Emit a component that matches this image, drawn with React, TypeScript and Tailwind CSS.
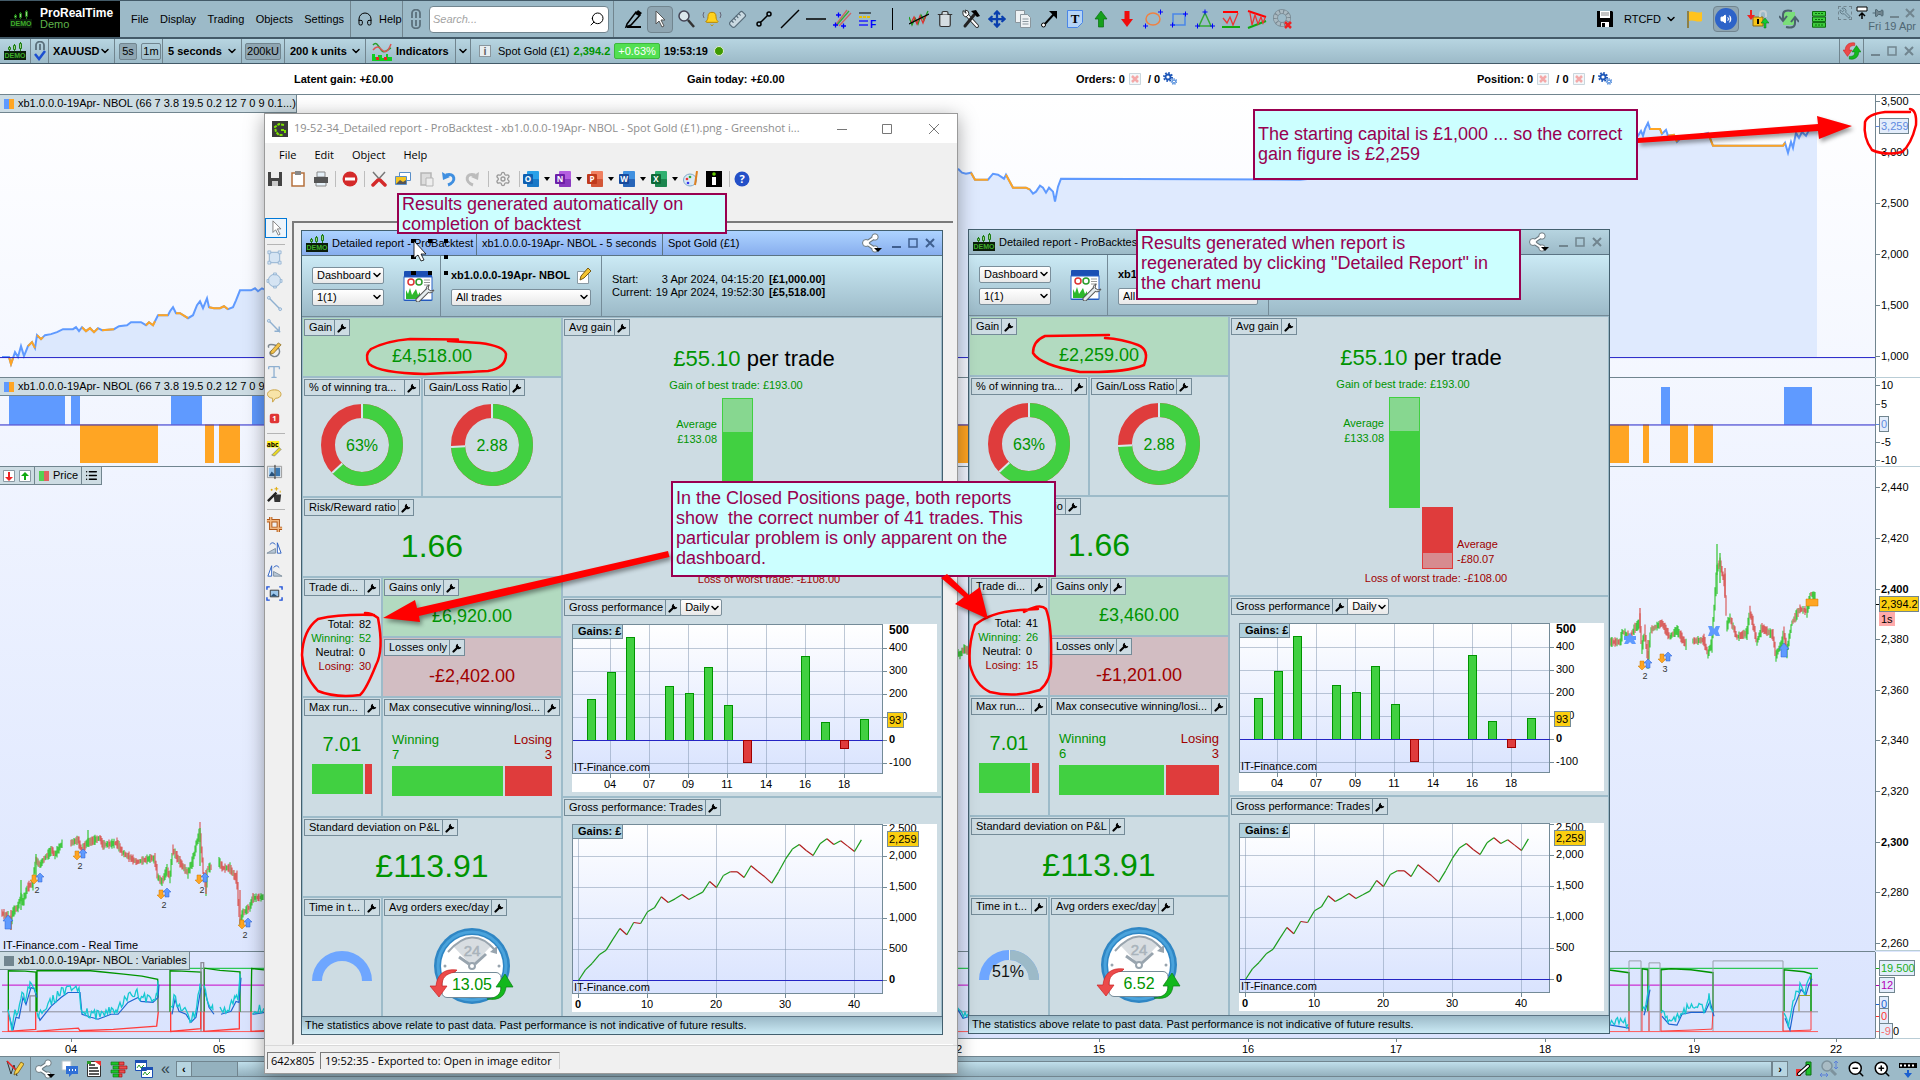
import type { ReactNode } from "react";
import {
    Bell, ChevronDown, Copy, Headphones, Link2, MousePointer2, Move, Pin, Ruler,
    Search, Trash2, Volume2, Wrench, Settings as Cog,
    ZoomIn, ZoomOut, Type, List,
} from "lucide-react";

type Point = [number, number];

const toPath = (pts: Point[]) => pts.map(([x, y]) => `${x},${y}`).join(" ");

const noise = (n: number) => {
    const v = Math.sin(n * 127.1 + 11.7) * 43758.5453;
    return v - Math.floor(v);
};

/* ---------- chart data ---------- */

const equityLeft: Point[] = [
    [2, 358], [9, 358], [11, 365], [15, 353], [18, 358], [21, 347], [24, 357], [28, 347], [32, 343], [35, 349],
    [37, 336], [41, 340], [45, 336], [51, 335], [57, 333], [63, 330], [73, 330], [76, 328], [79, 332], [82, 328],
    [86, 332], [90, 329], [94, 333], [98, 329], [102, 331], [114, 330], [119, 327], [127, 326], [131, 323], [141, 323],
    [146, 326], [149, 323], [153, 326], [158, 316], [168, 316], [170, 312], [173, 308], [176, 314], [180, 314],
    [188, 319], [193, 316], [197, 306], [200, 302], [203, 309], [207, 299], [209, 308], [214, 309], [220, 309],
    [224, 307], [228, 310], [233, 308], [236, 301], [240, 291], [251, 291], [255, 289], [258, 292], [262, 289], [264, 290],
];

const equityRight: Point[] = [
    [958, 169], [962, 173], [966, 174], [971, 173], [975, 180], [988, 180], [993, 174], [998, 175], [1004, 179], [1006, 175],
    [1013, 188], [1026, 188], [1030, 190], [1033, 194], [1036, 192], [1040, 186], [1043, 188], [1046, 193], [1049, 188],
    [1053, 192], [1055, 202], [1058, 187], [1061, 179], [1300, 180], [1420, 168], [1560, 150], [1638, 136], [1641, 131],
    [1643, 136], [1645, 129], [1648, 123], [1650, 129], [1660, 129], [1662, 134], [1666, 130], [1668, 136], [1674, 135],
    [1677, 142], [1682, 137], [1692, 137], [1700, 135], [1708, 133], [1713, 146], [1783, 146], [1785, 143], [1788, 153],
    [1791, 142], [1793, 148], [1796, 133], [1799, 138], [1802, 132], [1806, 136], [1809, 130], [1813, 128], [1817, 128],
];

const orangeRuns: Point[][] = [
    [[9, 358], [11, 365], [13, 359]],
    [[28, 347], [32, 343], [35, 349]],
    [[37, 336], [41, 340], [43, 338]],
    [[82, 328], [86, 332], [90, 329], [94, 333], [98, 329]],
    [[102, 331], [114, 330]],
    [[146, 326], [149, 323], [153, 326], [155, 322]],
    [[158, 316], [168, 316]],
    [[176, 314], [180, 314], [188, 319]],
    [[209, 308], [214, 309], [220, 309], [224, 307], [228, 310]],
    [[971, 173], [975, 180], [988, 180]],
    [[1006, 175], [1013, 188], [1026, 188], [1030, 190]],
    [[1650, 129], [1660, 129], [1662, 134]],
    [[1668, 136], [1674, 135], [1677, 142]],
    [[1708, 133], [1713, 146], [1783, 146], [1785, 143]],
];

const priceRuns: Point[][] = [
    [[2, 913], [8, 917], [11, 923], [13, 912], [18, 907], [21, 897], [23, 902], [28, 887], [33, 883], [36, 860], [40, 865], [45, 858], [52, 850], [55, 855], [63, 842]],
    [[71, 843], [78, 840], [82, 850], [87, 843], [100, 838], [103, 845], [117, 843], [123, 853], [137, 862], [152, 858], [155, 860], [158, 877], [162, 882], [167, 870], [170, 877], [173, 850], [182, 865], [188, 873], [193, 860], [197, 842], [200, 832], [204, 877], [206, 888], [208, 868], [212, 867]],
    [[219, 862], [223, 868], [230, 868], [237, 880], [240, 922], [243, 913], [250, 907], [253, 898], [264, 897]],
    [[957, 652], [960, 655], [964, 649], [969, 651]],
    [[1610, 642], [1620, 642], [1623, 632], [1630, 637], [1635, 628], [1640, 623], [1642, 647], [1645, 633], [1648, 660], [1651, 630], [1662, 623], [1670, 637], [1677, 630], [1687, 646]],
    [[1693, 641], [1704, 640], [1708, 654], [1712, 642], [1717, 570], [1720, 562], [1725, 585], [1727, 626], [1730, 618], [1737, 637], [1747, 633], [1750, 612], [1753, 623], [1757, 642], [1762, 628], [1773, 635], [1776, 656], [1782, 642], [1784, 633], [1787, 651], [1792, 623], [1800, 609], [1807, 611], [1811, 594], [1816, 597]],
];

const variableRuns: Point[][] = [
    [[8, 1011], [12, 1026], [15, 1013], [18, 1014], [22, 993], [25, 1000], [30, 983], [33, 984], [36, 993]],
    [[37, 1011], [39, 1016], [50, 1002], [60, 993], [67, 988], [79, 988], [81, 1010], [90, 1013], [97, 1015], [110, 1010], [117, 1010], [127, 998], [137, 993], [140, 997], [152, 998], [157, 993], [158, 980]],
    [[171, 1010], [174, 995], [178, 1007], [185, 1010], [190, 1018], [195, 1013], [200, 983]],
    [[204, 987], [208, 1003], [213, 1010]],
    [[220, 1010], [230, 1007], [235, 997], [238, 998], [240, 973]],
    [[252, 1010], [264, 1008]],
    [[955, 1002], [962, 1014], [969, 1012]],
    [[1604, 1020], [1628, 1024]],
    [[1643, 1011], [1646, 1000], [1649, 985]],
    [[1661, 1012], [1668, 1020], [1676, 1021], [1681, 1010], [1690, 1008], [1704, 1008], [1709, 997], [1713, 1012]],
    [[1784, 1014], [1789, 1026], [1793, 1003], [1800, 985], [1805, 990], [1808, 980], [1811, 974]],
];

function candles(runs: Point[][]) {
    let up = "";
    let down = "";
    runs.forEach((run) => {
        for (let i = 0; i < run.length - 1; i++) {
            const [x0, y0] = run[i];
            const [x1, y1] = run[i + 1];
            const slope = (y1 - y0) / (x1 - x0);
            for (let x = x0; x < x1; x++) {
                const y = y0 + slope * (x - x0);
                const size = 3 + noise(x) * 7 + Math.min(Math.abs(slope), 14);
                const bar = `M${x} ${(y - size / 2).toFixed(1)}v${size.toFixed(1)}`;
                if (noise(x * 3 + 1) + slope * 0.15 < 0.5) up += bar;
                else down += bar;
            }
        }
    });
    return { up, down };
}

function wiggle(run: Point[], swing: number): Point[] {
    const out: Point[] = [];
    for (let i = 0; i < run.length - 1; i++) {
        const [x0, y0] = run[i];
        const [x1, y1] = run[i + 1];
        for (let x = x0; x < x1; x += 1.5) {
            out.push([x, y0 + ((y1 - y0) * (x - x0)) / (x1 - x0) + (noise(x * 2) - 0.5) * swing]);
        }
    }
    out.push(run[run.length - 1]);
    return out;
}

const price = candles(priceRuns);

const trades = [
    0, 171, 279, 414, 489, 667, 839, 737, 935, 919, 1108, 1172, 1350, 1258, 1317, 1387, 1307, 1366, 1425, 1597, 1500,
    1694, 1753, 1753, 1661, 1850, 1758, 1672, 1570, 1753, 1957, 2119, 2194, 2097, 2016, 2204, 2285, 2194, 2253, 2167,
    2081, 2269,
];

const gainBars = [
    [15, 75], [35, 48], [54, 13], [93, 62], [113, 69], [132, 43], [152, 81], [229, 32], [249, 98], [288, 95],
];

/* ---------- small pieces ---------- */

function DemoLogo() {
    return <svg viewBox="0 0 22 18" className="w-[22px] h-[18px] shrink-0">
        <path d="M5.500 4v5M10.500 2v7M16.500 0v9" stroke="#1d7d13" />
        <path d="M4.500 5.500h2v2h-2zM9.500 3.500h2v4h-2zM15.500 1.500h2v5h-2z" fill="#9ccf86" stroke="#1d7d13" />
        <rect y="9" width="22" height="9" fill="#0b1c0b" />
        <text x="11" y="16" fontSize="7" fontWeight="bold" textAnchor="middle" fill="#3fae2a">DEMO</text>
    </svg>;
}

function WrenchGlyph() {
    return <svg viewBox="0 0 10 10" className="size-[10px]">
        <path d="M1.500 8.500L6 4" stroke="#000" strokeWidth="2.200" strokeLinecap="round" />
        <path d="M6 .8A2.800 2.800 0 1 0 9.300 4L7.400 4.300 5.900 2.800z" fill="#000" />
    </svg>;
}

function ShareGlyph() {
    return <svg viewBox="0 0 22 20" className="w-[22px] h-5 shrink-0">
        <path d="M5 10l9-6M5 10l9 6" stroke="#6b7a82" strokeWidth="4" />
        <circle cx="5" cy="10" r="3.500" fill="#fff" stroke="#6b7a82" />
        <circle cx="14" cy="4" r="3.200" fill="#fff" stroke="#6b7a82" />
        <circle cx="14" cy="16" r="3.200" fill="#fff" stroke="#6b7a82" />
        <path d="M5 10l9-6M5 10l9 6" stroke="#fff" strokeWidth="2" />
        <path d="M13 15h8l-4 4z" />
    </svg>;
}

function Chevron() {
    return <ChevronDown className="size-3 shrink-0" strokeWidth={3} />;
}

function Select({ label, value, className = "" }: { label: string; value: string; className?: string }) {
    return <span className={`grid items-center h-[17px] border border-[#7b8f9b] rounded-[2px] bg-linear-to-b from-white to-[#e9e9e9] ${className}`}>
        <select aria-label={label} className="col-start-1 row-start-1 appearance-none bg-transparent w-full pl-1 text-[11px] leading-[15px]">
            <option>{value}</option>
        </select>
        <span className="col-start-1 row-start-1 justify-self-end pointer-events-none"><Chevron /></span>
    </span>;
}

function WindowButtons({ color }: { color: string }) {
    return <svg viewBox="0 0 44 12" className="w-[44px] h-3 shrink-0" fill="none" stroke={color} strokeWidth="2">
        <path d="M1 10h9M35 2l8 8M43 2l-8 8" />
        <path d="M18 2h8v8h-8z" strokeWidth="1.500" />
    </svg>;
}

function Callout({ className, children }: { className: string; children: ReactNode }) {
    return <p className={`absolute flex border-2 border-[#990050] bg-[#ccffff] text-[#990050] text-[18px] leading-5 pl-[3px] whitespace-pre ${className}`}>
        {children}
    </p>;
}

function SwapArrows({ className = "" }: { className?: string }) {
    return <svg viewBox="0 0 20 20" className={className}>
        <path d="M13 1C6 0 2.500 4 2.500 9H0l5 7 5-7H7C7 5 9 4 13 4z" fill="#ec4a4a" stroke="#c22" strokeWidth=".6" />
        <path d="M7 19c7 1 10.500-3 10.500-8H20l-5-7-5 7h3c0 4-2 5-6 5z" fill="#13b81c" stroke="#0a7d12" strokeWidth=".6" />
    </svg>;
}

/* ---------- report ---------- */

type ReportData = {
    active: boolean;
    capital: string;
    gain: string;
    gains: string;
    losses: string;
    counts: [string, string, string, string];
    winning: number;
    inMarket?: string;
    orders: string;
};

function Cell({ title, wide, tone = "bg-[#cddce3]", className = "", extra, children }: {
    title: string; wide?: boolean; tone?: string; className?: string; extra?: ReactNode; children?: ReactNode;
}) {
    return <section className={`flex flex-col ${tone} ${className}`}>
        <div className="flex mt-px mx-px">
            <h3 className={`flex justify-between h-[17px] border border-[#748b98] text-[11px] leading-[15px] whitespace-nowrap ${wide ? "flex-1" : ""}`}>
                <span className="pl-1 pr-0.5">{title}</span>
                <button aria-label={`${title} settings`} className="w-[15px] border-l border-[#748b98] flex items-center justify-center">
                    <WrenchGlyph />
                </button>
            </h3>
            {extra}
        </div>
        <div className="flex-1 flex flex-col items-center justify-center">{children}</div>
    </section>;
}

function Donut({ share, label }: { share: number; label: string }) {
    const len = 2 * Math.PI * 34;
    const angle = share * 2 * Math.PI;
    const sin = Math.sin(angle);
    const cos = -Math.cos(angle);
    return <svg viewBox="0 0 82 82" className="size-[82px] mb-0.5">
        <circle cx="41" cy="41" r="34" fill="none" stroke="#df3c3c" strokeWidth="14" />
        <circle cx="41" cy="41" r="34" fill="none" stroke="#41d041" strokeWidth="14" strokeDasharray={`${len * share} ${len}`} transform="rotate(-90 41 41)" />
        <path d={`M41 14V0M${41 + sin * 27} ${41 + cos * 27}L${41 + sin * 41} ${41 + cos * 41}`} stroke="#d9e6ec" strokeWidth="2" />
        <text x="41" y="47" fontSize="16" textAnchor="middle" fill="#009400">{label}</text>
    </svg>;
}

function AvgGainChart() {
    return <svg viewBox="0 0 378 260" className="w-[378px] h-[260px]" fontSize="11">
        <text x="191" y="30" fontSize="22" textAnchor="middle"><tspan fill="#009400">£55.10</tspan> per trade</text>
        <text x="173" y="53" textAnchor="middle" fill="#009400">Gain of best trade: £193.00</text>
        <rect x="159.500" y="62.500" width="30" height="110" fill="#87d790" stroke="#41d041" />
        <rect x="159" y="96" width="31" height="77" fill="#41d041" />
        <text x="154" y="92" textAnchor="end" fill="#009400">Average</text>
        <text x="154" y="107" textAnchor="end" fill="#009400">£133.08</text>
        <rect x="192.500" y="172.500" width="30" height="61" fill="#d78b8f" stroke="#df3c3c" />
        <rect x="192" y="172" width="31" height="46" fill="#df3c3c" />
        <text x="227" y="213" fill="#a00000">Average</text>
        <text x="227" y="228" fill="#a00000">-£80.07</text>
        <text x="206" y="247" textAnchor="middle" fill="#a00000">Loss of worst trade: -£108.00</text>
    </svg>;
}

function GainsTag() {
    return <>
        <rect x=".5" y=".5" width="50" height="14" fill="#b0d0dd" stroke="#748b98" />
        <text x="6" y="11" fontWeight="bold">Gains: £</text>
    </>;
}

function DailyChart() {
    return <svg viewBox="0 0 365 168" className="w-[365px] h-[168px] mt-1 ml-1 bg-white" fontSize="11">
        <rect x=".5" y=".5" width="310" height="149" fill="url(#plot)" stroke="#748b98" />
        {[38, 77, 116, 155, 194, 233, 272].map((x, i) => <g key={x}>
            <path d={`M${x}.500 1v148`} stroke="#7f94ad" strokeOpacity=".5" />
            <path d={`M${x}.500 150v4`} stroke="#748b98" />
            <text x={x} y="164" textAnchor="middle">{["04", "07", "09", "11", "14", "16", "18"][i]}</text>
        </g>)}
        {[24, 47, 70, 93, 139].map((y) => <path key={y} d={`M1 ${y}.500h309`} stroke="#7f94ad" strokeOpacity=".5" />)}
        {gainBars.map(([x, top]) => <rect key={x} x={x + 0.5} y={top + 0.5} width="8" height={116 - top} fill="#41d041" stroke="#009400" />)}
        <path d="M1 116.500h314" stroke="#2424c4" />
        <rect x="171.500" y="116.500" width="8" height="22" fill="#df3c3c" stroke="#a00000" />
        <rect x="268.500" y="116.500" width="8" height="8" fill="#df3c3c" stroke="#a00000" />
        {["400", "300", "200", "100", "0", "-100"].map((t, i) => <g key={t}>
            <path d={`M311 ${24 + i * 23}.500h4`} stroke="#748b98" />
            <text x="317" y={27 + i * 23} fontWeight={t === "0" ? "bold" : "normal"}>{t}</text>
        </g>)}
        <text x="317" y="10" fontSize="12" fontWeight="bold">500</text>
        <rect x="315.500" y="88.500" width="16" height="15" fill="#fbce10" stroke="#748b98" />
        <text x="317" y="100">93</text>
        <text x="2" y="147">IT-Finance.com</text>
        <GainsTag />
    </svg>;
}

function TradesChart() {
    const at = (i: number): Point => [6.5 + i * 6.9, 156.5 - trades[i] * 0.062];
    return <svg viewBox="0 0 365 188" className="w-[365px] h-[188px] mt-1 ml-1 bg-white" fontSize="11">
        <rect x=".5" y=".5" width="310" height="169" fill="url(#plot)" stroke="#748b98" />
        {[6, 75, 144, 213, 282].map((x, i) => <g key={x}>
            <path d={`M${x}.500 1v168`} stroke="#7f94ad" strokeOpacity=".5" />
            <path d={`M${x}.500 170v4`} stroke="#748b98" />
            <text x={x} y="184" textAnchor="middle" fontWeight={i === 0 ? "bold" : "normal"}>{i * 10}</text>
        </g>)}
        {[32, 63, 94, 125].map((y) => <path key={y} d={`M1 ${y}.500h309`} stroke="#7f94ad" strokeOpacity=".5" />)}
        <path d="M1 156.500h314" stroke="#2424c4" />
        {trades.slice(1).map((v, i) => {
            const [x1, y1] = at(i);
            const [x2, y2] = at(i + 1);
            return <line key={i} x1={x1} y1={y1} x2={x2} y2={y2} stroke={v > trades[i] ? "#1c9c1c" : "#b01c1c"} strokeWidth="1.200" />;
        })}
        {["2,500", "2,000", "1,500", "1,000", "500", "0"].map((t, i) => <g key={t}>
            <path d={`M311 ${1 + i * 31}.500h4`} stroke="#748b98" />
            <text x="317" y={(i === 0 ? 8 : 4) + i * 31} fontWeight={t === "0" ? "bold" : "normal"}>{t}</text>
        </g>)}
        <rect x="315.500" y="7.500" width="31" height="15" fill="#fbce10" stroke="#748b98" />
        <text x="317" y="19">2,259</text>
        <text x="2" y="167">IT-Finance.com</text>
        <GainsTag />
    </svg>;
}

function OrdersClock({ value }: { value: string }) {
    return <svg viewBox="0 0 86 80" className="w-[86px] h-[80px]">
        <circle cx="43" cy="40" r="38" fill="#2f86c4" />
        <circle cx="43" cy="40" r="34" fill="none" stroke="#4aa3dc" strokeWidth="3" />
        <circle cx="43" cy="40" r="31" fill="#fff" />
        <path d="M43 40L24 20Q43 4 62 20z" fill="#d8dde1" />
        <path d="M19 26Q43-2 66 24" fill="none" stroke="#98a4ae" strokeWidth="2" />
        <path d="M68 20v8l-7-2z" fill="#98a4ae" />
        <text x="43" y="30" fontSize="15" textAnchor="middle" fill="#a9b3bb" stroke="#a9b3bb" strokeWidth=".5">24</text>
        <path d="M30 31l10 7M57 28L46 38" stroke="#98a4ae" strokeWidth="3" />
        <circle cx="43" cy="40" r="3" fill="#fff" stroke="#98a4ae" strokeWidth="2" />
        <circle cx="16" cy="40" r="1.500" fill="#98a4ae" />
        <circle cx="70" cy="40" r="1.500" fill="#98a4ae" />
        <rect x="13" y="46.500" width="59" height="25" rx="5" fill="#fff" stroke="#748b98" />
        <path d="M28 44C14 42 8 50 7 60H1l9 11 8-11h-5c0-8 3-12 13-14z" fill="#ec4a4a" stroke="#c22" strokeWidth=".7" />
        <path d="M58 73c14 2 18-4 19-12h7l-8-13-9 13h5c0 7-4 11-14 12z" fill="#13b81c" stroke="#0a7d12" strokeWidth=".7" />
        <text x="43" y="64" fontSize="16" textAnchor="middle" fill="#009400">{value}</text>
    </svg>;
}

function ReportIcon() {
    return <svg viewBox="0 0 32 32" className="size-8 shrink-0">
        <rect x="1" y="1" width="28" height="30" rx="1" fill="#1b4fb4" />
        <rect x="1" y="7" width="28" height="23" fill="#fff" stroke="#2a62c8" />
        <circle cx="8" cy="12" r="3" fill="none" stroke="#d33" strokeWidth="1.500" />
        <circle cx="16" cy="12" r="3" fill="none" stroke="#2a9c2a" strokeWidth="1.500" />
        <path d="M21 10h6M21 12.500h6M21 15h6" stroke="#999" />
        <path d="M3 29v-9l2 4 2-6 2 7 2-3 2-3 2 6 2-3v7z" fill="#2cb82c" />
        <path d="M15 30l9-9" stroke="#555" strokeWidth="5" strokeLinecap="round" />
        <path d="M26 15a4 4 0 1 0 5 5l-3 1-3-2z" fill="#e6ecef" stroke="#555" />
        <path d="M15 30l9-9" stroke="#e6ecef" strokeWidth="3" strokeLinecap="round" />
    </svg>;
}

function Report({ data }: { data: ReportData }) {
    const [total, winning, neutral, losing] = data.counts;
    return <article className="w-[642px] flex flex-col border border-[#43606f] bg-[#9dbbc9] text-[11px] text-black">
        <header className={`flex items-center h-[25px] border-b border-[#5b7484] bg-linear-to-b ${data.active ? "from-[#add3ff] to-[#88aeee]" : "from-[#b6d4e0] to-[#9cbac8]"}`}>
            <span className="pl-1"><DemoLogo /></span>
            <span className="w-[148px] pl-1 whitespace-nowrap">Detailed report - ProBacktest</span>
            <span className="w-[186px] pl-[5px] border-l border-[#5b7484] leading-6 whitespace-nowrap">xb1.0.0.0-19Apr- NBOL - 5 seconds</span>
            <span className="flex-1 pl-[5px] border-l border-[#5b7484] leading-6">Spot Gold (£1)</span>
            <span className="pr-2"><ShareGlyph /></span>
            <span className="pr-[7px]"><WindowButtons color={data.active ? "#3f5f8f" : "#71858f"} /></span>
        </header>
        <div className="flex h-[61px] border-b border-[#748b98] bg-linear-to-b from-[#cbeaf5] to-[#9cbac8]">
            <div className="w-[139px] flex items-center pl-[10px] gap-[19px] border-r border-[#748b98]">
                <div className="flex flex-col gap-[5px]">
                    <Select label="Page" value="Dashboard" className="w-[72px]" />
                    <Select label="Run" value="1(1)" className="w-[72px]" />
                </div>
                <ReportIcon />
            </div>
            <div className="w-[161px] flex flex-col justify-center gap-1 pl-[10px] border-r border-[#748b98]">
                <div className="flex items-center justify-between pr-2 font-bold whitespace-nowrap">
                    xb1.0.0.0-19Apr- NBOL
                    <svg viewBox="0 0 18 18" className="size-[18px]">
                        <path d="M2.500 4.500h11v12h-11z" fill="#fff" stroke="#8a9aa4" />
                        <path d="M5 13l1-4 7-8 3 3-7 7z" fill="#f4c430" stroke="#7a5a10" />
                    </svg>
                </div>
                <Select label="Trades" value="All trades" className="w-[140px]" />
            </div>
            <div className="grid grid-cols-[42px_115px_auto] content-center pl-[10px] leading-[13px] whitespace-nowrap">
                <span>Start:</span><span className="text-right pr-[5px]">3 Apr 2024, 04:15:20</span><b>[£1,000.00]</b>
                <span>Current:</span><span className="text-right pr-[5px]">19 Apr 2024, 19:52:30</span><b>[{data.capital}]</b>
            </div>
        </div>
        <div className="flex gap-0.5 px-px pt-px">
            <div className="w-[258px] flex flex-col gap-0.5 text-[#009400]">
                <Cell title="Gain" tone="bg-[#b2dac0] [&_h3]:bg-[#cddce3] [&_h3]:text-black" className="h-[58px]">
                    <span className="text-[18px]">{data.gain}</span>
                </Cell>
                <div className="flex gap-0.5 h-[118px] [&_h3]:text-black">
                    <Cell title="% of winning tra..." wide className="w-[118px]"><Donut share={0.63} label="63%" /></Cell>
                    <Cell title="Gain/Loss Ratio" className="flex-1"><Donut share={0.742} label="2.88" /></Cell>
                </div>
                <Cell title="Risk/Reward ratio" tone="bg-[#cddce3] [&_h3]:text-black" className="h-[78px]">
                    <span className="text-[32px]">1.66</span>
                </Cell>
                <div className="flex gap-0.5 h-[118px] [&_h3]:text-black">
                    <Cell title="Trade di..." wide className="w-[78px]">
                        <dl className="grid grid-cols-[51px_auto] gap-x-[5px] w-full pb-0.5 leading-[14px] text-black">
                            <dt className="text-right">Total:</dt><dd>{total}</dd>
                            <dt className="text-right text-[#009400]">Winning:</dt><dd className="text-[#009400]">{winning}</dd>
                            <dt className="text-right">Neutral:</dt><dd>{neutral}</dd>
                            <dt className="text-right text-[#a00000]">Losing:</dt><dd className="text-[#a00000]">{losing}</dd>
                        </dl>
                    </Cell>
                    <div className="flex-1 flex flex-col gap-0.5">
                        <Cell title="Gains only" tone="bg-[#b2dac0] [&_h3]:bg-[#cddce3]" className="flex-1">
                            <span className="text-[18px]">{data.gains}</span>
                        </Cell>
                        <Cell title="Losses only" tone="bg-[#d2bdc2] [&_h3]:bg-[#cddce3]" className="flex-1">
                            <span className="text-[18px] text-[#a00000]">{data.losses}</span>
                        </Cell>
                    </div>
                </div>
                <div className="flex gap-0.5 h-[118px] [&_h3]:text-black">
                    <Cell title="Max run..." wide className="w-[78px]">
                        <span className="text-[20px] leading-6">7.01</span>
                        <div className="flex gap-0.5 w-[60px] h-[30px] mt-2 mb-1.5">
                            <span className="flex-1 bg-[#41d041]" />
                            <span className="w-[7px] bg-[#df3c3c]" />
                        </div>
                    </Cell>
                    <Cell title="Max consecutive winning/losi..." wide className="flex-1">
                        <div className="flex justify-between w-[160px] text-[13px] leading-[15px]">
                            <span>Winning<br />{data.winning}</span>
                            <span className="text-right text-[#a00000]">Losing<br />3</span>
                        </div>
                        <div className="flex gap-0.5 w-[160px] h-[30px] mt-1 mb-1">
                            <span className="bg-[#41d041]" style={{ flexGrow: data.winning }} />
                            <span className="bg-[#df3c3c]" style={{ flexGrow: 3 }} />
                        </div>
                    </Cell>
                </div>
                <Cell title="Standard deviation on P&L" tone="bg-[#cddce3] [&_h3]:text-black" className="h-[78px]">
                    <span className="text-[32px]">£113.91</span>
                </Cell>
                <div className="flex gap-0.5 h-[118px] [&_h3]:text-black">
                    <Cell title="Time in t..." wide className="w-[78px]">
                        <svg viewBox="0 0 60 30" className="w-[60px] h-[30px]">
                            <path d="M5 30a25 25 0 0 1 50 0" fill="none" stroke="#6ea6ff" strokeWidth="10" />
                            {data.inMarket && <>
                                <path d="M31 5a25 25 0 0 1 24 25" fill="none" stroke="#9cbac8" strokeWidth="10" />
                                <path d="M30.500 0v10" stroke="#e4eef2" />
                                <text x="29" y="27" fontSize="16" textAnchor="middle" fill="#111">{data.inMarket}</text>
                            </>}
                        </svg>
                    </Cell>
                    <Cell title="Avg orders exec/day" className="flex-1"><OrdersClock value={data.orders} /></Cell>
                </div>
            </div>
            <div className="flex-1 flex flex-col gap-0.5">
                <Cell title="Avg gain" className="h-[278px]"><AvgGainChart /></Cell>
                <Cell title="Gross performance" className="h-[198px]" extra={<Select label="Period" value="Daily" className="w-[42px] -ml-px" />}>
                    <DailyChart />
                </Cell>
                <Cell title="Gross performance: Trades" className="h-[218px]"><TradesChart /></Cell>
            </div>
        </div>
        <footer className="h-[18px] pl-[3px] leading-[17px] border-t border-[#5b7484] bg-linear-to-b from-[#9cbac8] to-[#cbeaf5]">
            The statistics above relate to past data. Past performance is not indicative of future results.
        </footer>
    </article>;
}

/* ---------- platform bars ---------- */

const drawTools: { name: string; icon: ReactNode }[] = [
    { name: "Draw", icon: <g><path d="M3 15L12 3l4 3-9 10-5 2z" fill="none" stroke="#000" strokeWidth="1.500" /><path d="M11 5l3-4 4 3-3 3zM3 17h14v2H3z" /></g> },
    { name: "Select", icon: <path d="M6 2v13l3-3 3 6 2-1-3-6h4z" fill="#fff" stroke="#555" /> },
    { name: "Magnify", icon: <g fill="none"><circle cx="8" cy="7" r="5" fill="#dbe7ec" stroke="#445" strokeWidth="1.500" /><path d="M12 11l6 7" stroke="#333" strokeWidth="2.500" /></g> },
    { name: "Alert", icon: <g><Bell size={16} x={2} y={2} fill="#ffd21c" stroke="#b88700" strokeWidth={1.5} /><path d="M2 3q-2 3 0 6M18 3q2 3 0 6" fill="none" stroke="#667" /></g> },
    { name: "Measure", icon: <Ruler size={19} x={1} y={1} stroke="#556a78" strokeWidth={1.5} fill="#c9d9e1" className="-scale-x-100 origin-center" /> },
    { name: "Segment", icon: <path d="M6 14L14 6M3 15a2 2 0 1 0 4 0 2 2 0 1 0-4 0M13 5a2 2 0 1 0 4 0 2 2 0 1 0-4 0" fill="none" stroke="#000" strokeWidth="1.500" /> },
    { name: "Line", icon: <path d="M1 19L19 1" stroke="#000" strokeWidth="1.500" /> },
    { name: "Horizontal", icon: <path d="M0 10h20" stroke="#000" strokeWidth="1.500" /> },
    { name: "Channel", icon: <g fill="none" strokeWidth="1.300"><path d="M3 17L15 1M7 17L19 4" stroke="#c66" /><path d="M5 16L17 2" stroke="#3a3" /><path d="M1 16h5M3.500 13.500v5M9 17h5M11.500 14.500v5M4 6h5M6.500 3.500v5" stroke="#00f" /></g> },
    { name: "Fibonacci", icon: <g><path d="M1 4h12" stroke="#000" /><path d="M1 8h12" stroke="#e8c000" strokeWidth="2" strokeDasharray="3 1" /><path d="M1 12h9M1 16h9" stroke="#22f" strokeWidth="1.500" /><text x="12" y="19" fontSize="10" fontWeight="bold" fill="#00f">F</text></g> },
];

const objectTools: { name: string; icon: ReactNode }[] = [
    { name: "Pattern", icon: <g fill="none" strokeWidth="1.300"><path d="M0 8l3 8 3-7 3 6 3-9 3 5 4-9" stroke="#1c9c1c" /><path d="M2 14l3-6 3 7 3-8 3 7 3-8" stroke="#d33" /><path d="M0 15L20 5" stroke="#000" /></g> },
    { name: "Delete", icon: <Trash2 size={18} x={1} y={1} stroke="#333" fill="#d5dde1" strokeWidth={1.6} /> },
    { name: "Tools", icon: <g strokeLinecap="round"><path d="M5 5l11 12" stroke="#333" strokeWidth="4" /><path d="M5 5l11 12" stroke="#fff" strokeWidth="2" /><path d="M2 2q-1 5 3 6l3-3q0-4-4-4l1 3z" fill="#fff" stroke="#333" /><path d="M4 17L13 6" stroke="#222" strokeWidth="3" /><path d="M10 2l5-1 4 6-3 1z" /></g> },
    { name: "Move", icon: <Move size={18} x={1} y={1} stroke="#0a3fae" strokeWidth={3} /> },
    { name: "Copy", icon: <g fill="#eef2f4" stroke="#8a969d"><path d="M2.500 1.500h9v12h-9z" /><path d="M7.500 5.500h7l3 3v10h-10z" /><path d="M9.500 10h6M9.500 12.500h6M9.500 15h6" /></g> },
    { name: "Arrow", icon: <g><path d="M5 16L15 5" stroke="#000" strokeWidth="2" /><path d="M18 2v8l-8-8z" /><circle cx="4.500" cy="16" r="2" fill="#fff" stroke="#000" /></g> },
    { name: "Text", icon: <g><path d="M2.500 1.500h15v12l-5 5h-10z" fill="#b5d4f5" stroke="#4a86e8" /><text x="10" y="14" fontSize="13" fontWeight="bold" textAnchor="middle" fontFamily="Liberation Serif">T</text></g> },
    { name: "Buy arrow", icon: <path d="M10 2l6 8h-3.500v8h-5v-8H4z" fill="#15a01c" stroke="#0a6e10" strokeWidth=".7" /> },
    { name: "Sell arrow", icon: <path d="M10 18l6-8h-3.500V2h-5v8H4z" fill="#f00c0c" /> },
    { name: "Ellipse", icon: <g fill="none"><ellipse cx="10" cy="10" rx="7" ry="6" stroke="#f08040" strokeWidth="1.500" /><path d="M0 17h5M2.500 14.500v5M15 3h5M17.500 .5v5" stroke="#00f" /></g> },
    { name: "Rectangle", icon: <g fill="none"><path d="M4 5h12v11H4z" stroke="#4a86e8" strokeWidth="1.500" /><path d="M1 16h5M3.500 13.500v5M14 5h5M16.500 2.500v5" stroke="#00f" /></g> },
    { name: "Triangle", icon: <g fill="none"><path d="M10 4l6 13H4z" stroke="#3a3" strokeWidth="1.500" /><path d="M0 17h5M2.500 14.500v5M15 17h5M17.500 14.500v5M7.500 3h5M10 .5v5" stroke="#00f" /></g> },
    { name: "Range", icon: <g fill="none"><path d="M2 3h15" stroke="#f00" strokeWidth="2" /><path d="M1 18h18" stroke="#1a1" strokeWidth="2" /><path d="M2 9l4 5 3-6 3 8 5-12" stroke="#e33" strokeWidth="1.300" /></g> },
    { name: "Wedge", icon: <g fill="none"><path d="M1 2l18 6" stroke="#f00" strokeWidth="2" /><path d="M1 19l18-7" stroke="#1a1" strokeWidth="2" /><path d="M3 4l2 12 3-10 3 9 3-7 2 6 2-5" stroke="#e33" strokeWidth="1.300" /></g> },
    { name: "Clear", icon: <g fill="none"><circle cx="9" cy="9" r="6.500" stroke="#76868f" strokeWidth="5" /><circle cx="9" cy="9" r="6.500" stroke="#a9b9c1" strokeWidth="3.500" strokeDasharray="3 1" /><path d="M12 13l6 6M18 13l-6 6" stroke="#e22" strokeWidth="2.500" /></g> },
];

function ToolRow({ tools }: { tools: { name: string; icon: ReactNode }[] }) {
    return <>
        {tools.map((t) => <button key={t.name} aria-label={t.name} className={`w-[26px] h-[27px] shrink-0 flex items-center justify-center ${t.name === "Select" ? "border border-[#71858f] rounded-sm bg-[#8fa6b2]" : ""}`}>
            <svg viewBox="0 0 20 20" className="size-5">{t.icon}</svg>
        </button>)}
    </>;
}

function ChainIcon({ checked }: { checked?: boolean }) {
    return <svg viewBox="0 0 12 20" className="w-3 h-5" fill="none" stroke="#5b707c" strokeWidth="1.800">
        <path d="M2 9V4a3.500 3 0 0 1 8 0v5M6 3v6" />
        {checked ? <path d="M1 13l4 5 6-8" stroke="#1c4fd0" strokeWidth="2.500" /> : <path d="M2 11v5a3.500 3 0 0 0 8 0v-5M6 11v6" />}
    </svg>;
}

function TopBar() {
    return <header className="h-[39px] flex items-center border-t border-b-2 border-[#435a68] bg-[#9cbac8]">
        <div className="w-[120px] h-full shrink-0 flex items-center pl-[10px] gap-2 bg-black text-[11px]">
            <DemoLogo />
            <div className="leading-[11px] text-[#5fb44a]"><b className="text-xs leading-[11px] text-white">ProRealTime</b><br />Demo</div>
        </div>
        <nav className="w-[230px] shrink-0 flex justify-between pl-[11px] pr-[6px]">
            {["File", "Display", "Trading", "Objects", "Settings"].map((m) => <button key={m}>{m}</button>)}
        </nav>
        <button className="w-[53px] h-full shrink-0 flex items-center gap-1.5 pl-1.5 border-x border-[#71858f]">
            <Headphones className="size-4" strokeWidth={1.5} />Help
        </button>
        <span className="w-[26px] shrink-0 flex justify-center"><ChainIcon /></span>
        <label className="w-[180px] h-[27px] shrink-0 flex items-center px-[3px] rounded-sm border border-[#71858f] bg-white">
            <input placeholder="Search..." className="flex-1 min-w-0 italic placeholder:text-[#a3a3a3]" />
            <Search className="size-4 -scale-x-100" strokeWidth={1.5} />
        </label>
        <div className="h-full flex items-center ml-1 pl-[7px] border-l border-[#71858f]">
            <ToolRow tools={drawTools} />
            <span className="w-px h-[22px] ml-[11px] mr-[13px] bg-black" />
            <ToolRow tools={objectTools} />
        </div>
        <div className="ml-auto flex items-center pr-1">
            <svg viewBox="0 0 16 16" className="size-4 mr-[11px]"><path d="M0 0h15l1 1v15H0z" /><path d="M3 0h10v7H3zM4 11h8v5H4z" fill="#fff" /><path d="M4 2h8M4 4h8" stroke="#888" /><path d="M5 12h3v4H5z" /></svg>
            <button className="flex items-center gap-1">RTCFD <Chevron /></button>
            <svg viewBox="0 0 16 18" className="w-4 h-[18px] ml-2.5 mr-[10px]"><path d="M1 1v17" stroke="#8a6d1a" strokeWidth="1.500" /><path d="M2 2c4-2 8 2 13 0v9c-5 2-9-2-13 0z" fill="#ffc31f" /></svg>
            <button aria-label="Sound" className="w-[26px] h-[26px] mr-2 flex items-center justify-center rounded-sm border border-[#71858f] bg-[#8fa6b2]">
                <span className="size-[22px] rounded-full bg-[#2d63c8] flex items-center justify-center text-white"><Volume2 className="size-3" fill="white" /></span>
            </button>
            <svg viewBox="0 0 22 20" className="w-[22px] h-5 mr-[10px]"><path d="M6 8h10v9H6z" fill="#f6c416" stroke="#8a6d1a" /><path d="M10 10h2v5h-2z" /><path d="M13 8V5a3 3 0 0 1 6 0v3" fill="none" stroke="#c6ced2" strokeWidth="2" /><path d="M3 1v5H0l4 5 4-5H5V1z" fill="#e22" /><path d="M17 19v-5h-3l4-5 4 5h-3v5z" fill="#1c3" stroke="#0a6e10" strokeWidth=".5" /></svg>
            <svg viewBox="0 0 20 20" className="size-5 mr-[13px]"><path d="M4 3h12v13H4z" fill="#7ade7a" /><path d="M13 2q-9-2-9 4v5M0 7l4 5 4-5M7 18q9 2 9-4V9M12 13l4-5 4 5" fill="none" stroke="#4c626e" strokeWidth="2" /></svg>
            <svg viewBox="0 0 14 17" className="w-[14px] h-[17px] mr-3"><path d="M.5 .5h13v4.600H.500zM.5 6h13v4.600H.500zM.5 11.600h13v4.600H.500z" fill="#3fcf3f" stroke="#0b6b0b" /><path d="M3 2.500h8M3 8.500h8M3 14h8" stroke="#0b6b0b" strokeDasharray="2 1" /></svg>
            <div className="flex flex-col items-end text-[#4f6773]">
                <div className="flex items-center gap-1">
                    <span className="border border-dashed border-[#71858f]"><Wrench className="size-3 -scale-x-100" strokeWidth={1.5} /></span>
                    <svg viewBox="0 0 12 14" className="w-3 h-[14px]"><path d="M1 1h10v4H1z" fill="#fff" stroke="#000" /><path d="M6 7v6M3 10l3-3 3 3" fill="none" stroke="#000" strokeWidth="1.500" /></svg>
                    <Pin className="size-3 rotate-90" fill="#71858f" />
                    <svg viewBox="0 0 28 12" className="w-7 h-3" stroke="#71858f" strokeWidth="2"><path d="M2 10h9M18 2l8 8M26 2l-8 8" /></svg>
                </div>
                <span className="leading-3">Fri 19 Apr</span>
            </div>
        </div>
    </header>;
}

function InstrumentBar() {
    return <div className="h-[25px] flex items-center border-b border-[#435a68] bg-linear-to-b from-[#b7d5e1] to-[#9cbac8] [&>*]:shrink-0">
        <span className="w-[31px] h-full pl-1 flex items-center border-r border-[#71858f]"><DemoLogo /></span>
        <span className="w-[18px] h-full flex items-center justify-center border-r border-[#71858f]"><ChainIcon checked /></span>
        <button className="w-[66px] h-full flex items-center justify-between pl-1 pr-1 font-bold border-r border-[#71858f]">XAUUSD <Chevron /></button>
        <div className="w-[48px] h-full flex items-center gap-1 pl-1 border-r border-[#71858f]">
            <button className="w-[18px] h-[17px] rounded-xs border border-[#71858f] bg-[#8fa6b2] leading-[15px]">5s</button>
            <button className="w-5 h-[17px] rounded-xs border border-[#71858f] leading-[15px]">1m</button>
        </div>
        <button className="w-[79px] h-full flex items-center justify-between pl-[5px] pr-[3px] font-bold border-r border-[#71858f]">5 seconds <Chevron /></button>
        <div className="w-[43px] h-full flex items-center justify-center border-r border-[#71858f]">
            <button className="w-9 h-[17px] rounded-xs border border-[#71858f] bg-[#8fa6b2] leading-[15px]">200kU</button>
        </div>
        <button className="w-[81px] h-full flex items-center justify-between pl-[5px] pr-[3px] font-bold border-r border-[#71858f]">200 k units <Chevron /></button>
        <button className="w-[90px] h-full flex items-center gap-1 pl-1.5 font-bold border-r border-[#71858f]">
            <svg viewBox="0 0 20 20" className="size-5"><path d="M1 4c4-5 6 3 9 6s6-2 9-3" fill="none" stroke="#2a9c2a" strokeWidth="1.500" /><path d="M1 9c4-5 6-3 9 0s6 2 9-6" fill="none" stroke="#d55" strokeWidth="1.500" /><path d="M0 20v-7h3v3h3v-2h4v3h4v-4h2v3h4v4z" fill="#1c2" /><path d="M4 16h3v3H4zM12 16h3v3h-3z" fill="#e22" /></svg>
            Indicators
        </button>
        <button aria-label="More indicators" className="w-[15px] h-full flex items-center justify-center border-r border-[#71858f]"><Chevron /></button>
        <span className="w-3 h-3 ml-2 mr-[7px] border border-[#8a969d] bg-[#e8eef1] text-[#666] font-bold leading-[10px] text-center">i</span>
        <span>Spot Gold (£1)</span>
        <b className="ml-1 text-[#009400]">2,394.2</b>
        <span className="ml-1 px-[3px] leading-[14px] rounded-xs border border-[#3cb83c] bg-[#52e052] text-white">+0.63%</span>
        <b className="ml-1">19:53:19</b>
        <span className="size-2 ml-[6px] rounded-full border border-[#dfeed0] bg-[#3f9a00] box-content" />
        <span className="h-full ml-auto w-[25px] flex items-center justify-center border-x border-[#71858f]"><SwapArrows className="size-[18px]" /></span>
        <span className="pl-[6px] pr-[6px]"><WindowButtons color="#71858f" /></span>
    </div>;
}

function CancelBox() {
    return <svg viewBox="0 0 12 12" className="inline size-3 mx-1 mb-0.5"><path d="M.5 .5h11v11H.500z" fill="#f3f7f9" stroke="#c9d6dd" /><path d="M3 3l6 6M9 3l-6 6" stroke="#f4a9a9" strokeWidth="2.500" /></svg>;
}

function Gears() {
    return <svg viewBox="0 0 14 13" className="inline w-[14px] h-[13px] mb-0.5" fill="none">
        <circle cx="5" cy="5" r="4" stroke="#1c56b8" strokeWidth="2" strokeDasharray="1.600 1.500" />
        <circle cx="5" cy="5" r="2.500" stroke="#1c56b8" strokeWidth="1.800" />
        <circle cx="11" cy="9.500" r="2.500" stroke="#3c7fd8" strokeWidth="1.500" strokeDasharray="1.200 1" />
        <circle cx="11" cy="9.500" r="1.500" stroke="#3c7fd8" />
    </svg>;
}

function AccountBar() {
    return <div className="h-[31px] grid grid-cols-[294fr_393fr_389fr_401fr_443fr] items-center font-bold border-b border-[#71858f] bg-white whitespace-nowrap">
        <span className="col-start-2">Latent gain: +£0.00</span>
        <span>Gain today: +£0.00</span>
        <span>Orders: 0<CancelBox /> / 0 <Gears /></span>
        <span>Position: 0<CancelBox /> / 0<CancelBox /> / <Gears /></span>
    </div>;
}

/* ---------- charts behind the windows ---------- */

function PanelTag({ children }: { children: ReactNode }) {
    return <div className="absolute top-0 left-0 h-[18px] flex items-center border-r border-b border-[#71858f] bg-[#cddce3] whitespace-nowrap">
        {children}
    </div>;
}

function Swatch({ a, b }: { a: string; b: string }) {
    return <svg viewBox="0 0 10 10" className="size-[10px] ml-1 mr-1"><path d="M0 0h5v10H0z" fill={a} /><path d="M5 0h5v10H5z" fill={b} /></svg>;
}

function Panel({ top, height, className, axis, tag, children }: {
    top: number; height: number; className: string; axis: ReactNode; tag: ReactNode; children: ReactNode;
}) {
    return <div className={`flex ${className}`}>
        <div className="relative flex-1 min-w-0 border-b border-[#71858f]">
            <svg viewBox={`0 ${top} 1875 ${height}`} preserveAspectRatio="none" className="block w-full h-full" fill="none">{children}</svg>
            {tag}
        </div>
        <svg viewBox={`1875 ${top} 45 ${height}`} preserveAspectRatio="xMinYMin" className="w-[45px] h-full shrink-0 bg-white" fontSize="11">
            <path d={`M1875.500 ${top}v${height}`} stroke="#71858f" />
            <path d={`M1875 ${top + height - 0.5}h45`} stroke="#b9cdd6" />
            {axis}
        </svg>
    </div>;
}

function AxisLabels({ items }: { items: [string, number][] }) {
    return <>
        {items.map(([t, y]) => <g key={t + y}>
            <path d={`M1876 ${y}.500h4`} stroke="#71858f" />
            <text x="1881" y={y + 4} fontWeight={t === "2,400" || t === "2,300" ? "bold" : "normal"}>{t}</text>
        </g>)}
    </>;
}

function AxisTag({ y, width, text, color, fill = "#e3edfb" }: { y: number; width: number; text: string; color: string; fill?: string }) {
    return <g>
        <path d={`M1876 ${y}.500h4`} stroke={color} />
        <rect x="1879.500" y={y - 7.5} width={width} height="15" fill={fill} stroke="#71858f" />
        <text x="1881" y={y + 4} fill={color}>{text}</text>
    </g>;
}

function TradeMark({ x, y, count }: { x: number; y: number; count?: string }) {
    return <g transform={`translate(${x} ${y})`}>
        <path d="M-3 8l4-4H-1V-1h-4v5h-2z" fill="#ffa523" stroke="#c97800" strokeWidth=".5" />
        <path d="M3-3l4 4H5v5H1V1h-2z" fill="#5f9aff" stroke="#2a5fd0" strokeWidth=".5" />
        {count && <text x="0" y="17" fontSize="9" textAnchor="middle" fill="#333">{count}</text>}
    </g>;
}

function Charts() {
    return <div className="flex-1 flex flex-col bg-linear-to-b from-white to-[#d9e3fe]">
        <Panel top={95} height={283} className="h-[283px]"
            tag={<PanelTag><Swatch a="#5f9aff" b="#ffa523" /><span>xb1.0.0.0-19Apr- NBOL (66 7 3.8 19.5 0.2 12 7 0 9 0.1...)</span></PanelTag>}
            axis={<>
                <AxisLabels items={[["3,500", 101], ["3,000", 152], ["2,500", 203], ["2,000", 254], ["1,500", 305], ["1,000", 356]]} />
                <AxisTag y={126} width={29} text="3,259" color="#5f8ae0" />
            </>}>
            <polygon points={`2,358 ${toPath(equityLeft)} 264,358`} fill="#dce8fd" />
            <polygon points={`958,358 ${toPath(equityRight)} 1817,358`} fill="#dfeafe" />
            <polyline points={toPath(equityLeft)} stroke="#5f9aff" strokeWidth="2" />
            <polyline points={toPath(equityRight)} stroke="#5f9aff" strokeWidth="2" />
            {orangeRuns.map((run) => <polyline key={run[0][0]} points={toPath(run)} stroke="#ffa523" strokeWidth="2" />)}
            <path d="M0 358.500h1875" stroke="#2222c8" />
        </Panel>
        <Panel top={378} height={89} className="h-[89px]"
            tag={<PanelTag><Swatch a="#5f9aff" b="#ffa523" /><span>xb1.0.0.0-19Apr- NBOL (66 7 3.8 19.5 0.2 12 7 0 9 0.1...)</span></PanelTag>}
            axis={<>
                <AxisLabels items={[["10", 385], ["5", 404], ["-5", 442], ["-10", 460]]} />
                <AxisTag y={424} width={9} text="0" color="#5f8ae0" />
            </>}>
            <path d="M9 387h56v38H9zM71 387h9v38h-9zM171 387h31v38h-31zM252 387h14v38h-14zM1661 387h9v38h-9zM1784 387h28v38h-28z" fill="#5f9aff" />
            <path d="M80 425h78v39H80zM205 425h9v39h-9zM219 425h21v39h-21zM955 425h20v39h-20zM1600 425h29v39h-29zM1643 425h6v39h-6zM1670 425h18v39h-18zM1694 425h19v39h-19z" fill="#ffa523" />
            <path d="M0 425.500h1875" stroke="#2222c8" />
        </Panel>
        <Panel top={467} height={484} className="flex-1 min-h-[484px]"
            tag={<>
                <PanelTag>
                    <svg viewBox="0 0 34 17" className="w-[34px] h-[17px]"><path d="M3.500 3.500h11v11h-11zM19.500 3.500h11v11h-11z" fill="#fff" stroke="#8a9aa4" /><path d="M8 5v5H5l4 4 4-4h-3V5z" fill="#e22" /><path d="M24 13V9h-3l4-4 4 4h-3v4z" fill="#1a1" /></svg>
                    <span className="h-full flex items-center border-x border-[#71858f] pr-[3px]"><Swatch a="#52d052" b="#e06060" />Price</span>
                    <List className="size-[13px] mx-[3px]" strokeWidth={2.5} />
                </PanelTag>
                <span className="absolute -bottom-0.5 left-[3px]">IT-Finance.com - Real Time</span>
            </>}
            axis={<>
                <AxisLabels items={[["2,440", 487], ["2,420", 538], ["2,400", 589], ["2,380", 639], ["2,360", 690], ["2,340", 740], ["2,320", 791], ["2,300", 842], ["2,280", 892], ["2,260", 943]]} />
                <AxisTag y={604} width={39} text="2,394.2" color="#000" fill="#fbce10" />
                <rect x="1879" y="612" width="16" height="14" fill="#ffaaaa" />
                <text x="1881" y="623">1s</text>
            </>}>
            <path d={price.up} stroke="#41c841" strokeWidth="1.200" />
            <path d={price.down} stroke="#d9605f" strokeWidth="1.200" />
            <path d="M21 880v30M36 854v22M88 830v16M200 828v38M1717 544v50M1720 553v30" stroke="#41c841" strokeWidth="1.300" />
            <path d="M206 870v24M240 890v34M11 910v20M1640 608v20M1648 640v28M1725 568v30" stroke="#d9605f" strokeWidth="1.300" />
            <path d="M8 915l5 6h-2v8H5v-8H3zM1784 643l5 6h-2v8h-6v-8h-2z" fill="#5f9aff" stroke="#2a5fd0" strokeWidth=".5" />
            <TradeMark x={37} y={876} count="2" />
            <TradeMark x={80} y={852} count="2" />
            <TradeMark x={164} y={891} count="2" />
            <TradeMark x={202} y={876} count="2" />
            <TradeMark x={245} y={921} count="2" />
            <TradeMark x={1645} y={662} count="2" />
            <TradeMark x={1665} y={655} count="3" />
            <path d="M1624 636h4l2-3 2 3h4v4h-2l2 4h-4l-2-2-2 2h-4l2-4h-2zM1708 626h4l2 3 2-3h4l-2 5 2 5h-4l-2-2-2 2h-4l2-5z" fill="#5f9aff" />
            <path d="M1806 599h12v7h-12z" fill="#ffa523" stroke="#c97800" strokeWidth=".5" />
        </Panel>
        <Panel top={951} height={87} className="h-[87px]"
            tag={<PanelTag><span className="size-[10px] ml-1 mr-1 bg-[#71858f]" /><span className="pr-0.5">xb1.0.0.0-19Apr- NBOL : Variables</span></PanelTag>}
            axis={<>
                <AxisTag y={967} width={35} text="19.500" color="#1cae1c" />
                <AxisTag y={984} width={15} text="12" color="#b400b4" />
                <AxisTag y={1003} width={9} text="0" color="#1e64d2" />
                <AxisTag y={1015} width={9} text="0" color="#f33" />
                <text x="1893" y="1034">0</text>
                <AxisTag y={1030} width={13} text="-9" color="#f76b6b" />
            </>}>
            <path d="M2 984.500h264M955 984.500h20M1600 984.500h218" stroke="#c800c8" />
            <path d="M2 1031.500h264M955 1031.500h20M1600 1031.500h218" stroke="#ff5a5a" />
            <path d="M2 1011.500h264M955 1011.500h20M1600 1011.500h218" stroke="#8c8c96" />
            <path d="M190 967.500h76M955 967.500h20M1600 967.500h218" stroke="#00be28" />
            {/* the left part is plotted on a grid three times finer than the page */}
            <g transform="translate(0 780) scale(.33333)" strokeWidth="4">
                <path d="M25 694V570l50 1 33 3v120M111 694V570h160l30 3 70 7 55 6 47 10 2 98M510 694V570l35 1 58 3v120M613 694V562l47 7 60 4v121M753 694l2-131 37 4" stroke="#009400" />
                <path d="M603 754V545h8v209M90 694v-48h16M475 650v44M718 640v54" stroke="#8c8c96" />
                <path d="M25 694v60l82-6V694M110 754l70-6 55-4 5 8 100-4 130-10 5-44M512 694v60l90-8V694M612 694v60l106-8V694M753 694v60l39-2" stroke="#ff3c3c" />
            </g>
            <path d="M1600 968l29 4v39M1642 1011v-43l6 1v42M1661 1011v-42l10-1 20 1 22 3v39M1784 1011v-42l20 2 7 2v38" stroke="#009400" strokeWidth="1.500" />
            <path d="M1629 1031v-71h12v71M1649 1031v-69h11v69M1713 1031v-71h70v71" stroke="#96a0aa" />
            <path d="M1629 1011v20M1642 1011v20M1649 1011v20M1661 1011v20l30-1 21-1 1-18M1783 1011v20l28-1v-19" stroke="#ff3c3c" />
            <path d="M1799 1011v-16h11" stroke="#a0a01e" />
            {variableRuns.map((run) => <g key={run[0][0]}>
                <polyline points={toPath(run.map(([x, y]): Point => [x + 1, y + 4]))} stroke="#1e64d2" strokeWidth="1.200" />
                <polyline points={toPath(wiggle(run, 10))} stroke="#14c8d2" strokeWidth="1.300" />
            </g>)}
        </Panel>
        <div className="h-[17px] flex bg-white">
            <svg viewBox="0 1038 1920 17" preserveAspectRatio="none" className="w-full h-full" fontSize="11">
                {([["04", 71], ["05", 219], ["12", 956], ["15", 1099], ["16", 1248], ["17", 1396], ["18", 1545], ["19", 1694], ["22", 1836]] as Array<[string, number]>).map(([t, x]) => <g key={t}>
                    <path d={`M${x}.500 1038v3`} stroke="#71858f" />
                    <text x={x} y="1052" textAnchor="middle">{t}</text>
                </g>)}
            </svg>
        </div>
    </div>;
}

function BottomBar() {
    return <footer className="h-[25px] flex items-center border-t border-[#71858f] bg-[#9cbac8] [&>svg]:shrink-0">
        <span className="w-[31px] h-full shrink-0 flex items-center justify-center border-r border-[#71858f]">
            <svg viewBox="0 0 18 18" className="size-[18px]"><path d="M1 1l4 13 3-9 3 11" fill="none" stroke="#333" /><path d="M1 1l10 10" stroke="#e22" strokeWidth="1.500" /><path d="M8 15l1-4 6-9 3 2-6 9z" fill="#f6d04a" stroke="#7a5a10" strokeWidth=".8" /></svg>
        </span>
        <span className="ml-[3px] flex shrink-0"><ShareGlyph /></span>
        <svg viewBox="0 0 18 18" className="size-[18px] ml-[5px]"><path d="M1 1h9v9H1z" fill="#fff" stroke="#b8c4ca" /><path d="M5 6h12v8h-6l-3 3v-3H5z" fill="#2f6fd6" /><path d="M8 10h1M11 10h1M14 10h1" stroke="#fff" strokeWidth="2" /></svg>
        <svg viewBox="0 0 16 18" className="w-4 h-[18px] ml-[7px]"><path d="M1.500 1.500h13v15h-13z" fill="#fff" stroke="#333" /><path d="M3 5h6M3 8h9M3 11h10M3 14h10" stroke="#222" strokeWidth="1.500" /><path d="M8 1h7v5z" fill="#e33" /><path d="M1 1h4v3H1z" fill="#2a9c2a" /></svg>
        <svg viewBox="0 0 18 18" className="size-[18px] ml-[8px]"><path d="M1 2h8v3H1zM3 6h6v3H3zM1 10h8v3H1zM3 14h6v3H3z" fill="#1fc32c" stroke="#0a6e10" strokeWidth=".6" /><path d="M9 2h5v3H9zM9 6h8v3H9zM9 10h6v3H9zM9 14h3v3H9z" fill="#e85050" stroke="#a00000" strokeWidth=".6" /></svg>
        <svg viewBox="0 0 18 18" className="size-[18px] ml-[7px]"><path d="M.5 .5h11v10H.500zM6.500 7.500h11v10h-11z" fill="#fff" stroke="#1b4fb4" /><path d="M0 0h12v3H0zM6 7h12v3H6z" fill="#1b4fb4" /><path d="M2 8l2-3 2 3 3-3M8 15l2-3 2 3 3-3" fill="none" stroke="#2a9c2a" /></svg>
        <span className="ml-2 text-base leading-4 text-[#33444d]">«</span>
        <button aria-label="Scroll left" className="ml-1.5 w-4 h-[16px] shrink-0 border border-[#71858f] bg-[#b7d5e1] font-bold leading-3">‹</button>
        <span className="w-[45px] h-[16px] shrink-0 border-y border-[#71858f] bg-[#94b1be]" />
        <span className="flex-1 h-[16px] border border-[#71858f] bg-linear-to-b from-[#c0dfeb] to-[#94b1be]" />
        <button aria-label="Scroll right" className="w-4 h-[16px] shrink-0 border border-[#71858f] bg-[#b7d5e1] font-bold leading-3">›</button>
        <svg viewBox="0 0 18 18" className="size-[18px] ml-[7px]"><path d="M11 2h5v13h-5z" fill="#1fc32c" stroke="#0a6e10" /><path d="M1 9h5v7H1z" fill="#e33" /><path d="M4 14l9-8" stroke="#000" strokeWidth="4" strokeLinecap="round" /><path d="M4 14l9-8" stroke="#fff" strokeWidth="2" strokeLinecap="round" /></svg>
        <svg viewBox="0 0 20 18" className="w-5 h-[18px] ml-[6px]" fill="none"><circle cx="8" cy="6" r="5" fill="#a9bcc5" stroke="#7d929d" strokeWidth="1.500" /><path d="M12 10l5 5" stroke="#7d929d" strokeWidth="3" /><path d="M17 1v8M15 3l2-2 2 2M15 7l2 2 2-2M1 15h8M3 13l-2 2 2 2M7 13l2 2-2 2" stroke="#5c80d8" /></svg>
        <ZoomOut className="size-[18px] ml-2" fill="white" />
        <ZoomIn className="size-[18px] ml-2" fill="white" />
        <svg viewBox="0 0 18 18" className="size-[18px] ml-2 mr-[3px]"><path d="M0 3h18v5H0z" fill="#000" /><path d="M1 5.500h16" stroke="#fff" strokeWidth="2" strokeDasharray="2 2" /><path d="M9 18l-4-5h3v-3h2v3h3z" fill="#1b5fd0" /></svg>
    </footer>;
}

/* ---------- Greenshot editor ---------- */

function OfficeIcon({ letter, dark, light }: { letter: string; dark: string; light: string }) {
    return <svg viewBox="0 0 16 16" className="size-4">
        <rect x="4" width="12" height="16" rx="1" fill={light} />
        <rect x="4" y="8" width="12" height="8" rx="1" fill={dark} opacity=".6" />
        <rect y="3" width="10" height="10" rx="1" fill={dark} />
        <text x="5" y="11" fontSize="8" fontWeight="bold" textAnchor="middle" fill="#fff">{letter}</text>
    </svg>;
}

const shapeTools: { name: string; icon: ReactNode }[] = [
    { name: "Rectangle", icon: <g fill="#d5e4f3" stroke="#8fb0d0"><path d="M3.500 3.500h11v11h-11z" /><path d="M2 2h3v3H2zM13 2h3v3h-3zM2 13h3v3H2zM13 13h3v3h-3z" strokeWidth=".8" /></g> },
    { name: "Ellipse", icon: <g fill="#d5e4f3" stroke="#8fb0d0"><circle cx="9" cy="9" r="6.500" /><path d="M8 1h3v2H8zM8 15h3v2H8zM1 8h2v3H1zM15 8h2v3h-2z" strokeWidth=".8" /></g> },
    { name: "Line", icon: <g fill="#d5e4f3" stroke="#8fb0d0"><path d="M3 3l12 12" strokeWidth="1.500" /><circle cx="3" cy="3" r="1.500" /><circle cx="15" cy="15" r="1.500" /></g> },
    { name: "Arrow", icon: <g fill="#d5e4f3" stroke="#8fb0d0"><path d="M3 3l12 12M14 9v5H9" fill="none" strokeWidth="1.500" /><circle cx="3" cy="3" r="1.500" /></g> },
    { name: "Freehand", icon: <g fill="none"><path d="M13 7c4 6-2 11-6 9s-4-5 1-6 6-5 0-6-6 1-5 3" stroke="#7d8790" strokeWidth="1.500" /><path d="M5 11l8-9 3 2-8 9-3 1z" fill="#f2c14a" stroke="#7a5a10" strokeWidth=".7" /></g> },
    { name: "Text", icon: <Type size={17} stroke="#8fb0d0" strokeWidth={2} /> },
    { name: "Speech bubble", icon: <path d="M9 3c9 0 9 9 1 9l-3 4v-4C-1 11 0 3 9 3z" fill="#f8e4a8" stroke="#c9a040" /> },
    { name: "Counter", icon: <g><rect x="4" y="4" width="10" height="10" rx="2" fill="#e03535" /><text x="9" y="12" fontSize="8" fontWeight="bold" textAnchor="middle" fill="#fff">1</text></g> },
];

const effectTools: { name: string; icon: ReactNode }[] = [
    { name: "Highlight", icon: <g><path d="M1 1h13v7H1z" fill="#ffee20" /><text x="7" y="7" fontSize="7" fontWeight="bold" textAnchor="middle">abc</text><path d="M6 16l8-8 2 2-7 7z" fill="#e8d820" stroke="#777" strokeWidth=".7" /></g> },
    { name: "Obfuscate", icon: <g><path d="M1.500 3.500h15v12h-15z" fill="#eee" stroke="#999" /><path d="M3 5h6v9H3z" fill="#9cc6ea" /><path d="M3 14l3-5 3 3v2z" fill="#26507a" /><path d="M10 5h5v9h-5z" fill="#3c78b0" /><path d="M9.500 2v15" stroke="#222" /></g> },
    { name: "Effects", icon: <g><path d="M8 9h8l-1 8H9z" fill="#333" /><path d="M2 16l9-9" stroke="#222" strokeWidth="2.500" /><path d="M11 1v4M9 3h4M6 3v2M5 4h2M15 5v2" stroke="#e0a800" /></g> },
];

const cropTools: { name: string; icon: ReactNode }[] = [
    { name: "Crop", icon: <g fill="none"><path d="M5 1v12h12M1 5h12v12" stroke="#b05818" strokeWidth="3.500" /><path d="M5 1v12h12M1 5h12v12" stroke="#f2b880" strokeWidth="1.500" /></g> },
    { name: "Rotate right", icon: <g><path d="M12 4v11h4z" fill="#fff" stroke="#2a5fc0" /><path d="M10 15H1l9-5z" fill="#b8c8d8" stroke="#8090a0" /><path d="M4 6q3-4 6 0" fill="none" stroke="#2a5fc0" /></g> },
    { name: "Rotate left", icon: <g><path d="M6 4v11H2z" fill="#fff" stroke="#2a5fc0" /><path d="M8 15h9l-9-5z" fill="#b8c8d8" stroke="#8090a0" /><path d="M8 6q3-4 6 0" fill="none" stroke="#2a5fc0" /></g> },
    { name: "Resize", icon: <g><path d="M4.500 5.500h9v7h-9z" fill="#9cc6ea" stroke="#333" /><path d="M5 12l3-3 4 3z" fill="#26507a" /><path d="M1 5V2h3M14 2h3v3M17 13v3h-3M4 16H1v-3" fill="none" stroke="#1b4fd8" strokeWidth="1.500" /></g> },
];

function EditorTools({ tools }: { tools: { name: string; icon: ReactNode }[] }) {
    return <>
        {tools.map((t) => <button key={t.name} aria-label={t.name} className="h-[23px] pl-px flex items-center">
            <svg viewBox="0 0 18 18" className="size-[17px]">{t.icon}</svg>
        </button>)}
    </>;
}

function DropArrow() {
    return <svg viewBox="0 0 6 4" className="w-1.5 h-1 mx-[5px]"><path d="M0 0h6L3 4z" /></svg>;
}

function Divider() {
    return <span className="w-px h-4 mx-[6px] bg-[#bdbdbd]" />;
}

function EditorWindow({ children }: { children: ReactNode }) {
    return <section className="absolute left-[264px] top-[113px] w-[694px] flex flex-col border border-[#9a9a9a] bg-[#f0f0f0] shadow-[0_4px_18px_rgba(0,0,0,0.35)] font-['Open_Sans',sans-serif] text-[12px]">
        <header className="h-[29px] flex items-center pl-[7px] bg-white text-[#8d8d8d] text-[11px] whitespace-nowrap">
            <svg viewBox="0 0 16 16" className="size-4 mr-[6px]"><path d="M0 0h16v16H0z" fill="#3a3a3a" /><path d="M12 4l-5-1-4 3 1 5 3 3h4M9 9h4v3" fill="none" stroke="#7be000" strokeWidth="2" strokeDasharray="3 1" /></svg>
            <span className="flex-1">19-52-34_Detailed report - ProBacktest - xb1.0.0.0-19Apr- NBOL - Spot Gold (£1).png - Greenshot i...</span>
            <svg viewBox="0 0 104 12" className="w-[104px] h-3 mr-[17px]" fill="none" stroke="#777"><path d="M1 6.500h10M93 1l10 10M103 1L93 11" /><path d="M46.500 1.500h9v9h-9z" /></svg>
        </header>
        <nav className="h-6 flex items-center gap-[18px] pl-[14px] text-[11px] text-black">
            {["File", "Edit", "Object", "Help"].map((m) => <button key={m}>{m}</button>)}
        </nav>
        <div className="h-6 flex items-center pl-[2px]">
            <svg viewBox="0 0 16 16" className="size-4"><path d="M1 1h14v14H1z" fill="#444" /><path d="M4 1h8v6H4z" fill="#eee" /><path d="M5 10h6v5H5z" fill="#ccc" /></svg>
            <svg viewBox="0 0 16 16" className="size-4 ml-[7px]"><path d="M2 2h12v13H2z" fill="#fff" stroke="#b5703c" strokeWidth="1.500" /><path d="M5 0h6v4H5z" fill="#888" /></svg>
            <svg viewBox="0 0 16 16" className="size-4 ml-[7px]"><path d="M4 1h8v5H4zM3 11h10v4H3z" fill="#e5f0f8" stroke="#888" /><path d="M1 6h14v6H1z" fill="#555" /></svg>
            <Divider />
            <svg viewBox="0 0 16 16" className="size-4"><circle cx="8" cy="8" r="7.500" fill="#d42a2a" /><path d="M3 6.500h10v3H3z" fill="#fff" /></svg>
            <Divider />
            <svg viewBox="0 0 16 16" className="size-4"><path d="M2 1l9 10M14 1L5 11" stroke="#777" strokeWidth="1.500" /><path d="M9 9l5 5M7 9l-5 5" stroke="#d42a2a" strokeWidth="3.500" strokeLinecap="round" /></svg>
            <svg viewBox="0 0 16 16" className="size-4 ml-2"><path d="M4.500 1.500h11v8h-11z" fill="#fff" stroke="#5a8fc8" /><path d="M.5 5.500h11v8H.500z" fill="#f5c420" stroke="#5a8fc8" /><path d="M1 13l4-4 3 2 3-2v4z" fill="#555" /></svg>
            <svg viewBox="0 0 16 16" className="size-4 ml-2"><path d="M2 2h10v12H2z" fill="#ddd" stroke="#b5b5b5" strokeWidth="1.500" /><path d="M7 7h7v8H7z" fill="#eee" stroke="#b5b5b5" /></svg>
            <svg viewBox="0 0 16 16" className="size-4 ml-1.5"><path d="M5 4c9-3 11 7 2 10" fill="none" stroke="#3f8fe0" strokeWidth="3" /><path d="M1 1l1 8 7-3z" fill="#3f8fe0" /></svg>
            <svg viewBox="0 0 16 16" className="size-4 ml-[7px]"><path d="M11 4C2 1 0 11 9 14" fill="none" stroke="#bcbcbc" strokeWidth="3" /><path d="M15 1l-1 8-7-3z" fill="#bcbcbc" /></svg>
            <span className="w-0.5" /><Divider />
            <Cog className="size-4 text-[#999]" />
            <span className="w-px h-4 ml-2 mr-[3px] bg-[#bdbdbd]" />
            <OfficeIcon letter="O" dark="#0f5fb0" light="#2ba0e8" /><DropArrow />
            <OfficeIcon letter="N" dark="#6d1fa8" light="#b45fe0" /><DropArrow />
            <OfficeIcon letter="P" dark="#c03a1c" light="#f08060" /><DropArrow />
            <OfficeIcon letter="W" dark="#174a9c" light="#3f90e0" /><DropArrow />
            <OfficeIcon letter="X" dark="#0f6a38" light="#30b070" /><DropArrow />
            <svg viewBox="0 0 16 16" className="size-4"><ellipse cx="7" cy="9" rx="6.500" ry="6" fill="#d8e8f5" stroke="#7fa8c8" /><circle cx="4" cy="8" r="1.300" fill="#e33" /><circle cx="7" cy="6" r="1.300" fill="#3a3" /><circle cx="5" cy="12" r="1.300" fill="#33e" /><path d="M14 0l-2 14" stroke="#e08020" strokeWidth="2" /></svg>
            <svg viewBox="0 0 16 16" className="size-4 ml-[7px]"><path d="M0 0h16v16H0z" /><path d="M6 6h4v8H6z" fill="#fff" /><circle cx="8" cy="3" r="1.800" fill="#6c0" /></svg>
            <span className="w-px h-4 ml-[7px] mr-[4px] bg-[#bdbdbd]" />
            <svg viewBox="0 0 16 16" className="size-4"><circle cx="8" cy="8" r="7.500" fill="#2450c8" /><text x="8" y="12" fontSize="11" fontWeight="bold" textAnchor="middle" fill="#fff">?</text></svg>
        </div>
        <div className="flex mt-[27px]">
            <div className="w-[27px] shrink-0 flex flex-col items-start">
                <button aria-label="Select" className="w-[22px] h-5 border border-[#0078d7] bg-[#eef5fb] flex items-center justify-center">
                    <svg viewBox="0 0 12 18" className="w-[11px] h-4"><path d="M2 1v13l3-3 3 6 2-1-3-6h4z" fill="#fff" stroke="#777" /></svg>
                </button>
                <span className="w-[18px] h-px ml-[2px] mt-[6px] mb-px bg-[#b5b5b5]" />
                <EditorTools tools={shapeTools} />
                <span className="w-[18px] h-px ml-[2px] my-[3px] bg-[#b5b5b5]" />
                <EditorTools tools={effectTools} />
                <span className="w-[18px] h-px ml-[2px] my-[3px] bg-[#b5b5b5]" />
                <EditorTools tools={cropTools} />
            </div>
            <div className="mt-[3px] w-[661px] border-t-2 border-l-2 border-[#7a7a7a] border-b border-b-white pl-[7px] pt-[7px] pb-[9px] font-['Liberation_Sans',sans-serif]">
                {children}
            </div>
        </div>
        <footer className="h-7 pt-[6px] flex gap-1 pl-[2px] items-start border-t border-[#d8d8d8] text-[11px] leading-4 text-black">
            <span className="pl-[3px] w-[49px] border-t border-l border-[#7a7a7a]">642x805</span>
            <span className="px-1 w-[240px] border-t border-l border-r border-[#7a7a7a] border-r-[#d0d0d0] whitespace-nowrap">19:52:35 - Exported to: Open in image editor</span>
        </footer>
    </section>;
}

/* ---------- mark-up drawn over everything ---------- */

function Markup() {
    return <svg viewBox="0 0 1920 1080" className="absolute left-0 top-0 w-[1920px] h-[1080px] pointer-events-none" fill="none">
        <g stroke="#ff0000" strokeWidth="2.500" strokeLinejoin="round" strokeLinecap="round">
            <path d="M458 339.500L410 339Q386 341 371 349Q364 355 369 364Q380 373 425 374Q470 372 488 371Q506 368 506 354Q504 346 480 343L448 341" />
            <path d="M1109 335L1045 336Q1033 341 1033 353Q1040 365 1080 372Q1125 373 1144 365Q1150 350 1138 345Q1122 339 1105 338" />
            <path d="M365 613Q372 613 378 618Q384 650 376 665Q366 690 360 695Q335 698 318 691Q303 675 302 655Q303 630 318 619Q340 614 374 615" />
            <path d="M1038 609L1020 610Q990 612 975 625Q968 645 970 665Q975 685 990 692Q1015 698 1040 690Q1052 680 1051 660Q1052 625 1046 609Q1040 603 1024 612" />
            <path d="M1910 109Q1917 110 1916 125Q1911 145 1902 152Q1885 156 1872 150Q1863 138 1865 122Q1868 114 1885 112L1910 112" />
        </g>
        <g fill="#ff0000" stroke="none" className="drop-shadow-[2px_3px_2px_rgba(0,0,0,0.4)]">
            <path d="M668 551l1.500 6L419 616l1 6-37-4 32-18 2 8z" />
            <path d="M941 578l6-4 22 21 11-8 8 32-33-15 9-7z" />
            <path d="M1638 138l180-14-1-8 35 10-33 13-1-8-180 12z" />
        </g>
        <path d="M411 239h5v4h-5zM428 239h4v4h-4zM444 239h4v4h-4zM411 255h5v4h-5zM444 255h4v4h-4zM411 271h5v4h-5zM428 271h4v4h-4zM444 271h4v4h-4z" fill="#000" />
        <path d="M414 241v17l4-3 3 6 3-1-3-6h5z" fill="#fff" stroke="#000" strokeWidth=".8" />
    </svg>;
}

const original: ReportData = {
    active: true, capital: "£5,518.00", gain: "£4,518.00", gains: "£6,920.00", losses: "-£2,402.00",
    counts: ["82", "52", "0", "30"], winning: 7, orders: "13.05",
};

const regenerated: ReportData = {
    active: false, capital: "£3,259.00", gain: "£2,259.00", gains: "£3,460.00", losses: "-£1,201.00",
    counts: ["41", "26", "0", "15"], winning: 6, inMarket: "51%", orders: "6.52",
};

export default function App() {
    return <div className="relative min-h-screen flex flex-col overflow-hidden bg-[#9cbac8] font-['Liberation_Sans',sans-serif] text-[11px] text-black">
        <svg className="absolute size-0">
            <defs>
                <linearGradient id="plot" x1="0" y1="0" x2="0" y2="1">
                    <stop offset="0" stopColor="#ffffff" />
                    <stop offset="1" stopColor="#d9e3fe" />
                </linearGradient>
            </defs>
        </svg>
        <TopBar />
        <InstrumentBar />
        <AccountBar />
        <Charts />
        <BottomBar />

        <div className="absolute left-[968px] top-[229px]"><Report data={regenerated} /></div>
        <EditorWindow><Report data={original} /></EditorWindow>

        <Callout className="left-[397px] top-[193px] w-[330px] h-[41px] items-center">{"Results generated automatically on\ncompletion of backtest"}</Callout>
        <Callout className="left-[1136px] top-[229px] w-[385px] h-[71px] pt-0.5">{"Results generated when report is\nregenerated by clicking \"Detailed Report\" in\nthe chart menu"}</Callout>
        <Callout className="left-[671px] top-[481px] w-[385px] h-[96px] pt-[5px]">{"In the Closed Positions page, both reports\nshow \u00a0the correct number of 41 trades. This\nparticular problem is only apparent on the\ndashboard."}</Callout>
        <Callout className="left-[1253px] top-[109px] w-[385px] h-[71px] pt-[13px]">{"The starting capital is £1,000 ... so the correct\ngain figure is £2,259"}</Callout>
        <Markup />
    </div>;
}
